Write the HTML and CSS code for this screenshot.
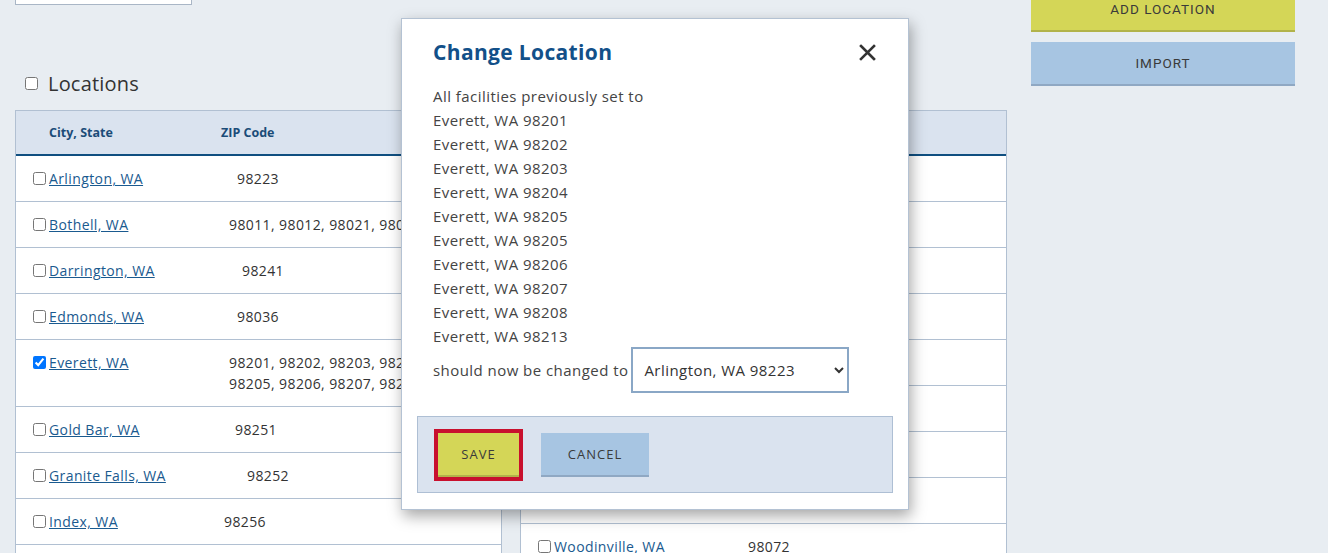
FILE: index.html
```html
<!DOCTYPE html>
<html lang="en">
<head>
    <meta charset="UTF-8">
    <meta name="viewport" content="width=device-width, initial-scale=1.0">
    <title>Locations</title>
    <link rel="stylesheet" href="styles.css">
</head>
<body>
    <div class="page">
        <div class="content">
            <input type="text" class="search">
            <h2 class="section-title"><input type="checkbox"> Locations</h2>

            <div class="tables">
                <div class="loc-table">
                    <div class="loc-head">
                        <span>City, State</span>
                        <span>ZIP Code</span>
                    </div>
                    <div class="loc-row" style="--city: 208px">
                        <span class="city"><input type="checkbox"><a href="#">Arlington, WA</a></span>
                        <span class="zip">98223</span>
                    </div>
                    <div class="loc-row" style="--city: 200px">
                        <span class="city"><input type="checkbox"><a href="#">Bothell, WA</a></span>
                        <span class="zip">98011, 98012, 98021, 98028</span>
                    </div>
                    <div class="loc-row" style="--city: 213px">
                        <span class="city"><input type="checkbox"><a href="#">Darrington, WA</a></span>
                        <span class="zip">98241</span>
                    </div>
                    <div class="loc-row" style="--city: 208px">
                        <span class="city"><input type="checkbox"><a href="#">Edmonds, WA</a></span>
                        <span class="zip">98036</span>
                    </div>
                    <div class="loc-row" style="--city: 200px">
                        <span class="city"><input type="checkbox" checked><a href="#">Everett, WA</a></span>
                        <span class="zip">98201, 98202, 98203, 98204,<br>98205, 98206, 98207, 98208</span>
                    </div>
                    <div class="loc-row" style="--city: 206px">
                        <span class="city"><input type="checkbox"><a href="#">Gold Bar, WA</a></span>
                        <span class="zip">98251</span>
                    </div>
                    <div class="loc-row" style="--city: 218px">
                        <span class="city"><input type="checkbox"><a href="#">Granite Falls, WA</a></span>
                        <span class="zip">98252</span>
                    </div>
                    <div class="loc-row" style="--city: 195px">
                        <span class="city"><input type="checkbox"><a href="#">Index, WA</a></span>
                        <span class="zip">98256</span>
                    </div>
                    <div class="loc-row loc-row-empty"></div>
                </div>

                <div class="loc-table">
                    <div class="loc-head">
                        <span>City, State</span>
                        <span>ZIP Code</span>
                    </div>
                    <div class="loc-row" style="--city: 208px">
                        <span class="city"><input type="checkbox"><a href="#">Lake Stevens, WA</a></span>
                        <span class="zip">98258</span>
                    </div>
                    <div class="loc-row" style="--city: 208px">
                        <span class="city"><input type="checkbox"><a href="#">Lynnwood, WA</a></span>
                        <span class="zip">98036, 98037</span>
                    </div>
                    <div class="loc-row" style="--city: 208px">
                        <span class="city"><input type="checkbox"><a href="#">Marysville, WA</a></span>
                        <span class="zip">98270, 98271</span>
                    </div>
                    <div class="loc-row" style="--city: 208px">
                        <span class="city"><input type="checkbox"><a href="#">Monroe, WA</a></span>
                        <span class="zip">98272</span>
                    </div>
                    <div class="loc-row" style="--city: 208px">
                        <span class="city"><input type="checkbox"><a href="#">Mukilteo, WA</a></span>
                        <span class="zip">98275</span>
                    </div>
                    <div class="loc-row" style="--city: 208px">
                        <span class="city"><input type="checkbox"><a href="#">Snohomish, WA</a></span>
                        <span class="zip">98290, 98296</span>
                    </div>
                    <div class="loc-row" style="--city: 208px">
                        <span class="city"><input type="checkbox"><a href="#">Stanwood, WA</a></span>
                        <span class="zip">98292</span>
                    </div>
                    <div class="loc-row" style="--city: 208px">
                        <span class="city"><input type="checkbox"><a href="#">Sultan, WA</a></span>
                        <span class="zip">98294</span>
                    </div>
                    <div class="loc-row" style="--city: 214px">
                        <span class="city"><input type="checkbox"><a href="#">Woodinville, WA</a></span>
                        <span class="zip">98072</span>
                    </div>
                </div>
            </div>
        </div>

        <div class="actions">
            <button class="btn btn-yellow">Add Location</button>
            <button class="btn btn-blue">Import</button>
        </div>
    </div>

    <div class="modal">
        <div class="modal-head">
            <h3>Change Location</h3>
            <button class="close" aria-label="Close">
                <svg width="17" height="17" viewBox="0 0 17 17"><path d="M2 2 L15 15 M15 2 L2 15" stroke="#333" stroke-width="2.6" stroke-linecap="square"/></svg>
            </button>
        </div>
        <div class="modal-body">
            <div>All facilities previously set to</div>
            <div>Everett, WA 98201</div>
            <div>Everett, WA 98202</div>
            <div>Everett, WA 98203</div>
            <div>Everett, WA 98204</div>
            <div>Everett, WA 98205</div>
            <div>Everett, WA 98205</div>
            <div>Everett, WA 98206</div>
            <div>Everett, WA 98207</div>
            <div>Everett, WA 98208</div>
            <div>Everett, WA 98213</div>
            <div class="change-row">
                should now be changed to
                <select>
                    <option>Arlington, WA 98223</option>
                    <option>Bothell, WA 98011</option>
                    <option>Darrington, WA 98241</option>
                </select>
            </div>
        </div>
        <div class="modal-foot">
            <button class="btn btn-yellow btn-save">Save</button>
            <button class="btn btn-blue btn-cancel">Cancel</button>
        </div>
    </div>
</body>
</html>
```

FILE: styles.css
```css
body {
    margin: 0;
    background: #e8edf2;
    font-family: "Open Sans", Arial, sans-serif;
    color: #333;
    overflow: hidden;
}

.page {
    display: flex;
    padding-left: 15px;
}

.content {
    width: 991px;
}

.search {
    display: block;
    width: 177px;
    height: 36px;
    margin-top: -31px;
    box-sizing: border-box;
    border: 1px solid #a9b6c6;
    background: #fff;
}

.section-title {
    display: flex;
    align-items: center;
    height: 44px;
    margin: 56px 0 5px;
    font-size: 20px;
    font-weight: 400;
    letter-spacing: 0.2px;
    color: #333;
}
.section-title input {
    width: 13px;
    height: 13px;
    margin: 0 10px 0 10px;
}

.tables {
    display: flex;
    gap: 18px;
}

.loc-table {
    width: 487px;
    box-sizing: border-box;
    border: 1px solid #b1c0d2;
    border-bottom: none;
    background: #fff;
    flex-shrink: 0;
}

.loc-head {
    display: grid;
    grid-template-columns: 172px 1fr;
    height: 43px;
    line-height: 43px;
    padding-left: 33px;
    background: #dae3ef;
    border-bottom: 2px solid #0f4f80;
    font-size: 12.5px;
    font-weight: 700;
    color: #1b4c78;
}

.loc-row {
    display: grid;
    grid-template-columns: var(--city) 1fr;
    padding: 12px 0 12px 13px;
    border-bottom: 1px solid #b1c0d2;
    font-size: 14px;
    line-height: 21px;
    letter-spacing: 0.4px;
}
.loc-row-empty {
    height: 21px;
}

.city {
    display: flex;
    align-items: center;
    align-self: start;
    height: 21px;
}
.city input {
    width: 13px;
    height: 13px;
    margin: 0 3px 0 4px;
}
.city a {
    color: #1a5a8f;
}

.zip {
    color: #333;
}

.actions {
    display: flex;
    flex-direction: column;
    gap: 10px;
    margin-left: 25px;
    margin-top: -12px;
    width: 264px;
}

.btn {
    border: none;
    cursor: pointer;
    font-family: inherit;
    text-transform: uppercase;
    letter-spacing: 1px;
    font-size: 13px;
    color: #3a3a3a;
}

.actions .btn {
    height: 44px;
    font-family: Roboto, Arial, sans-serif;
    font-size: 13.5px;
}

.btn-yellow {
    background: #d4d657;
    border-bottom: 2px solid #b2b34a;
}

.btn-blue {
    background: #a7c5e2;
    border-bottom: 2px solid #8fa8c3;
}

/* change location dialog */
.modal {
    position: absolute;
    left: 401px;
    top: 18px;
    width: 508px;
    height: 492px;
    box-sizing: border-box;
    background: #fff;
    border: 1px solid #b4c2d3;
    box-shadow: 2px 6px 14px rgba(0, 0, 0, 0.35);
}

.modal-head {
    display: flex;
    justify-content: space-between;
    align-items: center;
    padding: 18px 31px 0 31px;
}
.modal-head h3 {
    margin: 0;
    font-size: 21px;
    line-height: 30px;
    font-weight: 700;
    letter-spacing: 0.35px;
    color: #125089;
}
.close {
    border: none;
    background: none;
    padding: 0;
    width: 17px;
    height: 17px;
    cursor: pointer;
    margin-right: 1px;
}

.modal-body {
    padding: 17px 31px 0;
    font-size: 15px;
    line-height: 24px;
    letter-spacing: 0.45px;
    color: #444;
}

.change-row {
    display: flex;
    align-items: center;
    gap: 3px;
    margin-top: -1px;
}
.change-row select {
    width: 218px;
    height: 46px;
    border: 2px solid #8aa7c6;
    border-radius: 0;
    background: #fff;
    font-family: inherit;
    font-size: 15px;
    letter-spacing: 0.45px;
    color: #333;
    padding-left: 7px;
}

.modal-foot {
    display: flex;
    gap: 22px;
    margin: 23px 15px 0;
    padding: 16px 16px 15px;
    background: #dae3ef;
    border: 1px solid #aebfd4;
}

.btn-save {
    width: 81px;
    height: 44px;
    margin-left: 4px;
    outline: 4px solid #c8102e;
    outline-offset: 0;
    box-shadow: 0 0 0 1px #fff;
}

.btn-cancel {
    width: 108px;
    height: 44px;
}
```
